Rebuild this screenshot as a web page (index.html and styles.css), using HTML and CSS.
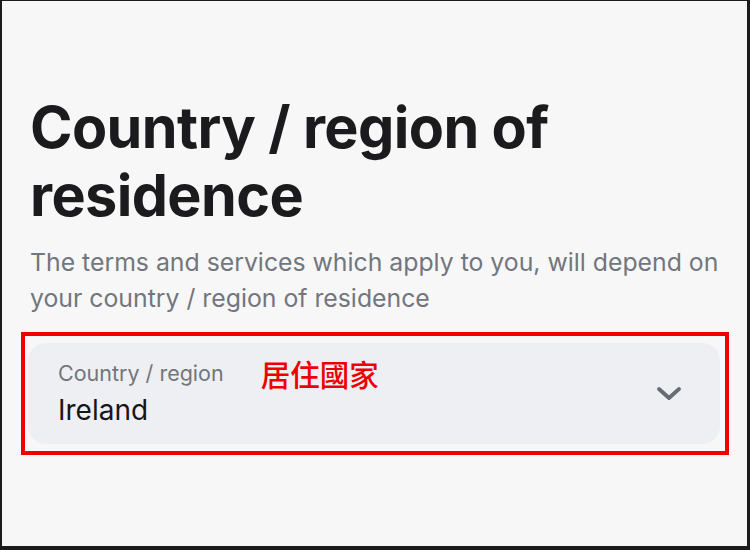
FILE: index.html
```html
<!DOCTYPE html>
<html lang="en">
<head>
<meta charset="utf-8">
<title>Country / region of residence</title>
<link rel="stylesheet" href="styles.css">
</head>
<body>
<div class="frame">
  <main class="content">
    <h1 class="title">Country / region of residence</h1>
    <p class="subtitle">The terms and services which apply to you, will depend on your country / region of residence</p>
    <div class="highlight">
      <div class="field">
        <div class="field-text">
          <div class="label-row">
            <span class="label">Country / region</span>
            <span class="note">居住國家</span>
          </div>
          <div class="value">Ireland</div>
        </div>
        <svg class="chevron" width="26" height="16" viewBox="0 0 26 16" aria-hidden="true">
          <path d="M3 3 L13 12 L23 3" fill="none" stroke="#666b74" stroke-width="3.8" stroke-linecap="round" stroke-linejoin="round"/>
        </svg>
      </div>
    </div>
  </main>
</div>
</body>
</html>
```
FILE: styles.css
```css
html, body {
  margin: 0;
  padding: 0;
  width: 750px;
  height: 550px;
  overflow: hidden;
  background: #111;
}
.frame {
  box-sizing: border-box;
  width: 750px;
  height: 550px;
  border-style: solid;
  border-color: #1b1b1b;
  border-width: 1px 3px 4px 2px;
  background: #f7f7f7;
  font-family: Inter, "Noto Sans", sans-serif;
}
.content {
  padding: 92px 0 0 19px;
}
.title {
  margin: 0 0 0 9px;
  font-size: 57.5px;
  font-weight: 700;
  line-height: 68px;
  letter-spacing: -0.6px;
  color: #1b1b1d;
  width: 600px;
}
.subtitle {
  margin: 15px 0 0 9px;
  font-size: 24.8px;
  line-height: 36px;
  color: #72767d;
  width: 700px;
}
.highlight {
  box-sizing: border-box;
  margin-top: 16px;
  width: 708px;
  border: 4px solid #f00000;
  padding: 7px 5px 7px 3px;
}
.field {
  display: flex;
  align-items: center;
  height: 101px;
  border-radius: 18px;
  background: #eeeff2;
  padding: 0 38px 0 30px;
}
.field-text {
  flex: 1;
}
.label-row {
  display: flex;
  align-items: center;
  gap: 37px;
  height: 26px;
}
.label {
  font-size: 21.5px;
  color: #72767d;
  line-height: 26px;
}
.note {
  font-family: "Noto Sans CJK TC", "Noto Sans CJK SC", sans-serif;
  font-size: 29.5px;
  font-weight: 500;
  color: #ee0000;
  line-height: 30px;
}
.value {
  margin-top: 7px;
  font-size: 28px;
  line-height: 34px;
  color: #161618;
}
.chevron {
  display: block;
}
```
